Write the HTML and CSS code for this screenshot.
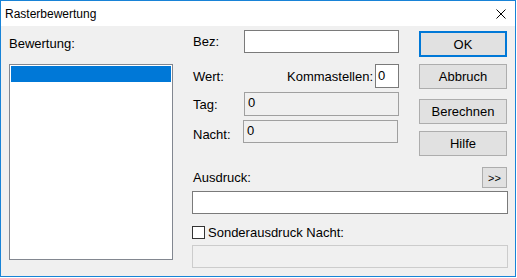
FILE: index.html
```html
<!DOCTYPE html>
<html lang="de">
<head>
  <meta charset="UTF-8" />
  <title>Rasterbewertung</title>
  <link rel="stylesheet" href="styles.css">
</head>
<body>
  <div class="window">
    <div class="titlebar">
      <span class="title">Rasterbewertung</span>
      <svg class="close" width="10" height="10" viewBox="0 0 10 10">
        <path d="M0.5 0.5 L9.5 9.5 M9.5 0.5 L0.5 9.5" stroke="#000" stroke-width="1" fill="none" />
      </svg>
    </div>

    <div class="content">
      <div class="left">
        <div class="label bew">Bewertung:</div>
        <div class="listbox">
          <div class="item selected"></div>
        </div>
      </div>

      <div class="right">
        <div class="top">
          <div class="fields">
            <div class="row row-bez">
              <div class="label name">Bez:</div>
              <div class="textbox wide"></div>
            </div>
            <div class="row row-wert">
              <div class="label name">Wert:</div>
              <div class="label komma">Kommastellen:</div>
              <div class="textbox small">0</div>
            </div>
            <div class="row row-tag">
              <div class="label name">Tag:</div>
              <div class="textbox wide disabled">0</div>
            </div>
            <div class="row row-nacht">
              <div class="label name clipped">Nacht:</div>
              <div class="textbox wide disabled">0</div>
            </div>
          </div>

          <div class="buttons">
            <button class="btn default">OK</button>
            <button class="btn btn-abbruch">Abbruch</button>
            <button class="btn btn-berechnen">Berechnen</button>
            <button class="btn btn-hilfe">Hilfe</button>
          </div>
        </div>

        <div class="expr">
          <div class="expr-head">
            <div class="label">Ausdruck:</div>
            <button class="btn more">&gt;&gt;</button>
          </div>
          <div class="textbox full"></div>
          <div class="check-row">
            <span class="checkbox"></span>
            <span class="label">Sonderausdruck Nacht:</span>
          </div>
          <div class="textbox full inactive"></div>
        </div>
      </div>
    </div>
  </div>
</body>
</html>
```

FILE: styles.css
```css
body {
  margin: 0;
  background: #fff;
  font-family: "Liberation Sans", Arial, sans-serif;
  font-size: 13px;
  color: #000;
}
.window {
  width: 516px;
  height: 277px;
  box-sizing: border-box;
  border: 1px solid #1883d7;
  background: #f0f0f0;
}
.titlebar {
  height: 25px;
  background: #fff;
  display: flex;
  align-items: center;
  justify-content: space-between;
  padding: 0 9px 0 4px;
}
.title {
  font-size: 12px;
  line-height: 15px;
  padding-top: 1px;
}
.close {
  display: block;
  margin-top: 1px;
}

.content {
  display: flex;
  height: 250px;
}
.label {
  line-height: 15px;
  white-space: nowrap;
}

/* left column */
.left {
  padding-left: 8px;
  width: 164px;
}
.bew {
  margin-top: 10px;
}
.listbox {
  margin-top: 13px;
  width: 164px;
  height: 196px;
  box-sizing: border-box;
  border: 1px solid #828790;
  background: #fff;
  padding: 1px;
}
.item {
  height: 16px;
}
.item.selected {
  background: #0078d7;
}

/* right area */
.right {
  margin-left: 19px;
  width: 316px;
  padding-top: 4px;
}
.top {
  display: flex;
  height: 126px;
}
.fields {
  width: 207px;
}
.row {
  display: flex;
  align-items: center;
}
.row-bez { height: 23px; }
.row-wert { height: 24px; margin-top: 11px; }
.row-tag { height: 24px; margin-top: 4px; }
.row-nacht { height: 23px; margin-top: 4px; }
.name {
  width: 51px;
  padding-left: 1px;
}
.komma {
  margin-left: auto;
  margin-right: 2px;
}
.clipped {
  align-self: flex-start;
  height: 21px;
  padding-top: 7px;
  box-sizing: border-box;
  overflow: hidden;
}

.textbox {
  box-sizing: border-box;
  border: 1px solid #7a7a7a;
  background: #fff;
  height: 100%;
  padding-left: 3px;
  line-height: 20px;
}
.wide {
  width: 155px;
}
.small {
  width: 24px;
  line-height: 21px;
  padding-left: 2px;
}
.disabled {
  border-color: #a0a0a0;
  background: #f0f0f0;
}

/* buttons */
.buttons {
  margin-left: 20px;
  width: 88px;
  display: flex;
  flex-direction: column;
}
.btn {
  font-family: "Liberation Sans", Arial, sans-serif;
  font-size: 13px;
  color: #000;
  background: #e1e1e1;
  border: 1px solid #adadad;
  padding: 0;
  height: 25px;
  width: 88px;
}
.btn.default {
  margin-top: 1px;
  height: 26px;
  border: 2px solid #0078d7;
}
.btn-abbruch { margin-top: 7px; }
.btn-berechnen { margin-top: 10px; }
.btn-hilfe { margin-top: 7px; }

/* expression section */
.expr {
  margin-top: 11px;
}
.expr-head {
  height: 21px;
  display: flex;
  align-items: center;
  justify-content: space-between;
  padding-left: 1px;
}
.more {
  width: 25px;
  height: 21px;
  font-size: 11px;
  margin-right: 1px;
}
.full {
  width: 316px;
  height: 23px;
  margin-top: 3px;
}
.check-row {
  display: flex;
  align-items: center;
  height: 15px;
  margin-top: 11px;
}
.checkbox {
  width: 13px;
  height: 13px;
  box-sizing: border-box;
  border: 1px solid #333;
  background: #fff;
  margin-right: 3px;
}
.inactive {
  margin-top: 5px;
  border-color: #cccccc;
  background: #f0f0f0;
}
```
